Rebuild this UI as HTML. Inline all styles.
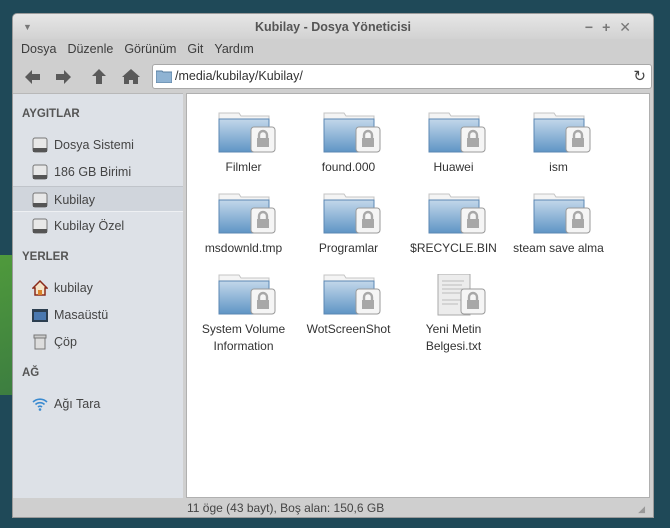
<!DOCTYPE html>
<html><head><meta charset="utf-8"><style>
*{margin:0;padding:0;box-sizing:border-box}
body{width:670px;height:528px;overflow:hidden;background:#1f4958;font-family:"Liberation Sans","DejaVu Sans",sans-serif;font-size:12px;color:#3a3a3a;position:relative}
.green{position:absolute;left:0;top:255px;width:20px;height:140px;background:linear-gradient(160deg,#4f9a3c,#3c7d40)}
.win{position:absolute;left:12px;top:13px;width:642px;height:505px;background:#cfcfcf;border:1px solid #9a9a9a;border-radius:5px 5px 0 0;overflow:hidden}
.title{height:25px;background:linear-gradient(#e6e6e6,#d2d2d2);text-align:center;font-weight:bold;color:#555;font-size:12.5px;line-height:26px;position:relative}
.menu{position:absolute;top:26px;left:8px;font-size:12.5px;color:#3c3c3c;line-height:18px}
.menu span{margin-right:11px}
.tb{position:absolute;top:49px;left:0;width:100%;height:30px}
.addr{position:absolute;left:139px;top:1px;width:500px;height:25px;background:#fff;border:1px solid #a8a8a8;border-radius:3px;font-size:12.5px;line-height:23px;padding-left:22px;color:#333}
.side{position:absolute;left:0;top:79px;width:170px;height:405px;background:#dde1e7;border-top:1px solid #b8b8b8}
.sh{position:absolute;left:9px;font-weight:bold;color:#555;font-size:11.5px}
.si{position:absolute;left:0;width:170px;height:26px;line-height:26px;padding-left:41px;font-size:12.5px;color:#444}
.si svg{position:absolute;left:19px;top:5px}
.main{position:absolute;left:173px;top:79px;width:464px;height:405px;background:#fff;border:1px solid #b0b0b0}
.it{position:absolute;width:105px;text-align:center;font-size:12px;color:#333;line-height:17px}
.it svg{display:block;margin:0 auto 5px}
.status{position:absolute;left:174px;top:485px;font-size:12px;color:#444;line-height:18px}
</style></head><body>
<div class="green"></div>
<div class="win">
<div class="title">Kubilay - Dosya Yöneticisi
<span style="position:absolute;left:10px;top:0;font-size:9px;color:#777">▼</span>
<span style="position:absolute;right:13px;top:0;color:#777;font-size:14px;letter-spacing:9px">−+✕</span></div>
<div class="menu"><span>Dosya</span><span>Düzenle</span><span>Görünüm</span><span>Git</span><span>Yardım</span></div>
<div class="tb">
<svg width="130" height="28" style="position:absolute;left:8px;top:0"><g fill="#5a5a5a">
<path d="M4 14 L11 7 L11 11 L19 11 L19 17 L11 17 L11 21 Z"/>
<path d="M50 14 L43 7 L43 11 L35 11 L35 17 L43 17 L43 21 Z"/>
<path d="M78 6 L85 13 L81 13 L81 21 L75 21 L75 13 L71 13 Z"/>
<path d="M110 6 L119 14 L117 14 L117 21 L112 21 L112 17 L108 17 L108 21 L103 21 L103 14 L101 14 Z"/></g></svg>
<div class="addr"><svg width="16" height="13" style="position:absolute;left:3px;top:5px"><path d="M0 1h6l1 1h9v11H0z" fill="#8fb3d3" stroke="#5a7fa2"/></svg>/media/kubilay/Kubilay/
<span style="position:absolute;right:5px;top:0;font-size:15px;color:#444">↻</span></div>
</div>
<div class="side">
<div class="sh" style="top:14px">AYGITLAR</div>
<div class="si" style="top:38px"><svg width="16" height="16"><rect x="1" y="1" width="14" height="14" rx="2" fill="#e8e8e8" stroke="#777"/><rect x="1" y="11" width="14" height="4" fill="#555"/></svg>Dosya Sistemi</div>
<div class="si" style="top:65px"><svg width="16" height="16"><rect x="1" y="1" width="14" height="14" rx="2" fill="#e8e8e8" stroke="#777"/><rect x="1" y="11" width="14" height="4" fill="#555"/></svg>186 GB Birimi</div>
<div class="si" style="top:92px;background:#d0d5dc;border-top:1px solid #c0c4ca;border-bottom:1px solid #eef0f3"><svg width="16" height="16"><rect x="1" y="1" width="14" height="14" rx="2" fill="#e8e8e8" stroke="#777"/><rect x="1" y="11" width="14" height="4" fill="#555"/></svg>Kubilay</div>
<div class="si" style="top:119px"><svg width="16" height="16"><rect x="1" y="1" width="14" height="14" rx="2" fill="#e8e8e8" stroke="#777"/><rect x="1" y="11" width="14" height="4" fill="#555"/></svg>Kubilay Özel</div>
<div class="sh" style="top:157px">YERLER</div>
<div class="si" style="top:181px"><svg width="16" height="16"><path d="M8 1L1 8h2v7h10V8h2z" fill="#f3e3c8" stroke="#8a2a1a" stroke-width="1.5"/><rect x="6" y="10" width="4" height="5" fill="#d9822b"/></svg>kubilay</div>
<div class="si" style="top:208px"><svg width="16" height="16"><rect x="0" y="2" width="16" height="13" fill="#2c3e50"/><rect x="2" y="5" width="12" height="8" fill="#4a78b0"/></svg>Masaüstü</div>
<div class="si" style="top:235px"><svg width="16" height="16"><rect x="3" y="4" width="10" height="11" fill="#ddd" stroke="#777"/><rect x="2" y="1" width="12" height="3" fill="#ccc" stroke="#777"/></svg>Çöp</div>
<div class="sh" style="top:273px">AĞ</div>
<div class="si" style="top:297px"><svg width="16" height="16"><g fill="none" stroke="#3a8ad0" stroke-width="1.6"><path d="M1 6a10 10 0 0 1 14 0"/><path d="M3.5 8.5a6.5 6.5 0 0 1 9 0"/><path d="M6 11a3 3 0 0 1 4 0"/></g><circle cx="8" cy="13.5" r="1.3" fill="#3a8ad0"/></svg>Ağı Tara</div>
</div>
<div class="main" id="m"></div>
<div class="status">11 öge (43 bayt), Boş alan: 150,6 GB</div>
<span style="position:absolute;right:8px;bottom:2px;color:#999;font-size:9px">◢</span>
</div>
<script>
var L='<rect x="47" y="15" width="24" height="25" rx="3" fill="#f5f5f5" stroke="#9a9a9a"/><rect x="53" y="26" width="12" height="9" fill="#a8a8a8"/><path d="M55 26v-3a4 4 0 0 1 8 0v3" fill="none" stroke="#a8a8a8" stroke-width="2.4"/>';
var F='<svg width="80" height="42" viewBox="0 0 80 42"><path d="M15 1h20l2 3h28v6H15z" fill="#f4f4f4" stroke="#c4c4c4"/><path d="M15 7h50v33H15z" fill="url(#g)" stroke="#5b87b3"/>'+L+'</svg>';
var T='<svg width="80" height="42" viewBox="0 0 80 42"><rect x="24" y="0" width="32" height="41" fill="#ececec" stroke="#aaa"/><g stroke="#bbb"><path d="M28 7h22M28 11h20M28 15h22M28 19h18M28 26h20M28 30h16"/></g>'+L+'</svg>';
var d='<svg width="0" height="0" style="position:absolute"><defs><linearGradient id="g" x1="0" y1="0" x2="0" y2="1"><stop offset="0" stop-color="#c2d7ea"/><stop offset="1" stop-color="#5f95c5"/></linearGradient></defs></svg>';
var n=["Filmler","found.000","Huawei","ism","msdownld.tmp","Programlar","$RECYCLE.BIN","steam save alma","System Volume Information","WotScreenShot","Yeni Metin Belgesi.txt"];
var h=d;n.forEach(function(s,i){var c=i%4,r=Math.floor(i/4);h+='<div class="it" style="left:'+(4+c*105)+'px;top:'+(18+r*81)+'px">'+(i==10?T:F)+s+'</div>'});
document.getElementById('m').innerHTML=h;
</script>
</body></html>
